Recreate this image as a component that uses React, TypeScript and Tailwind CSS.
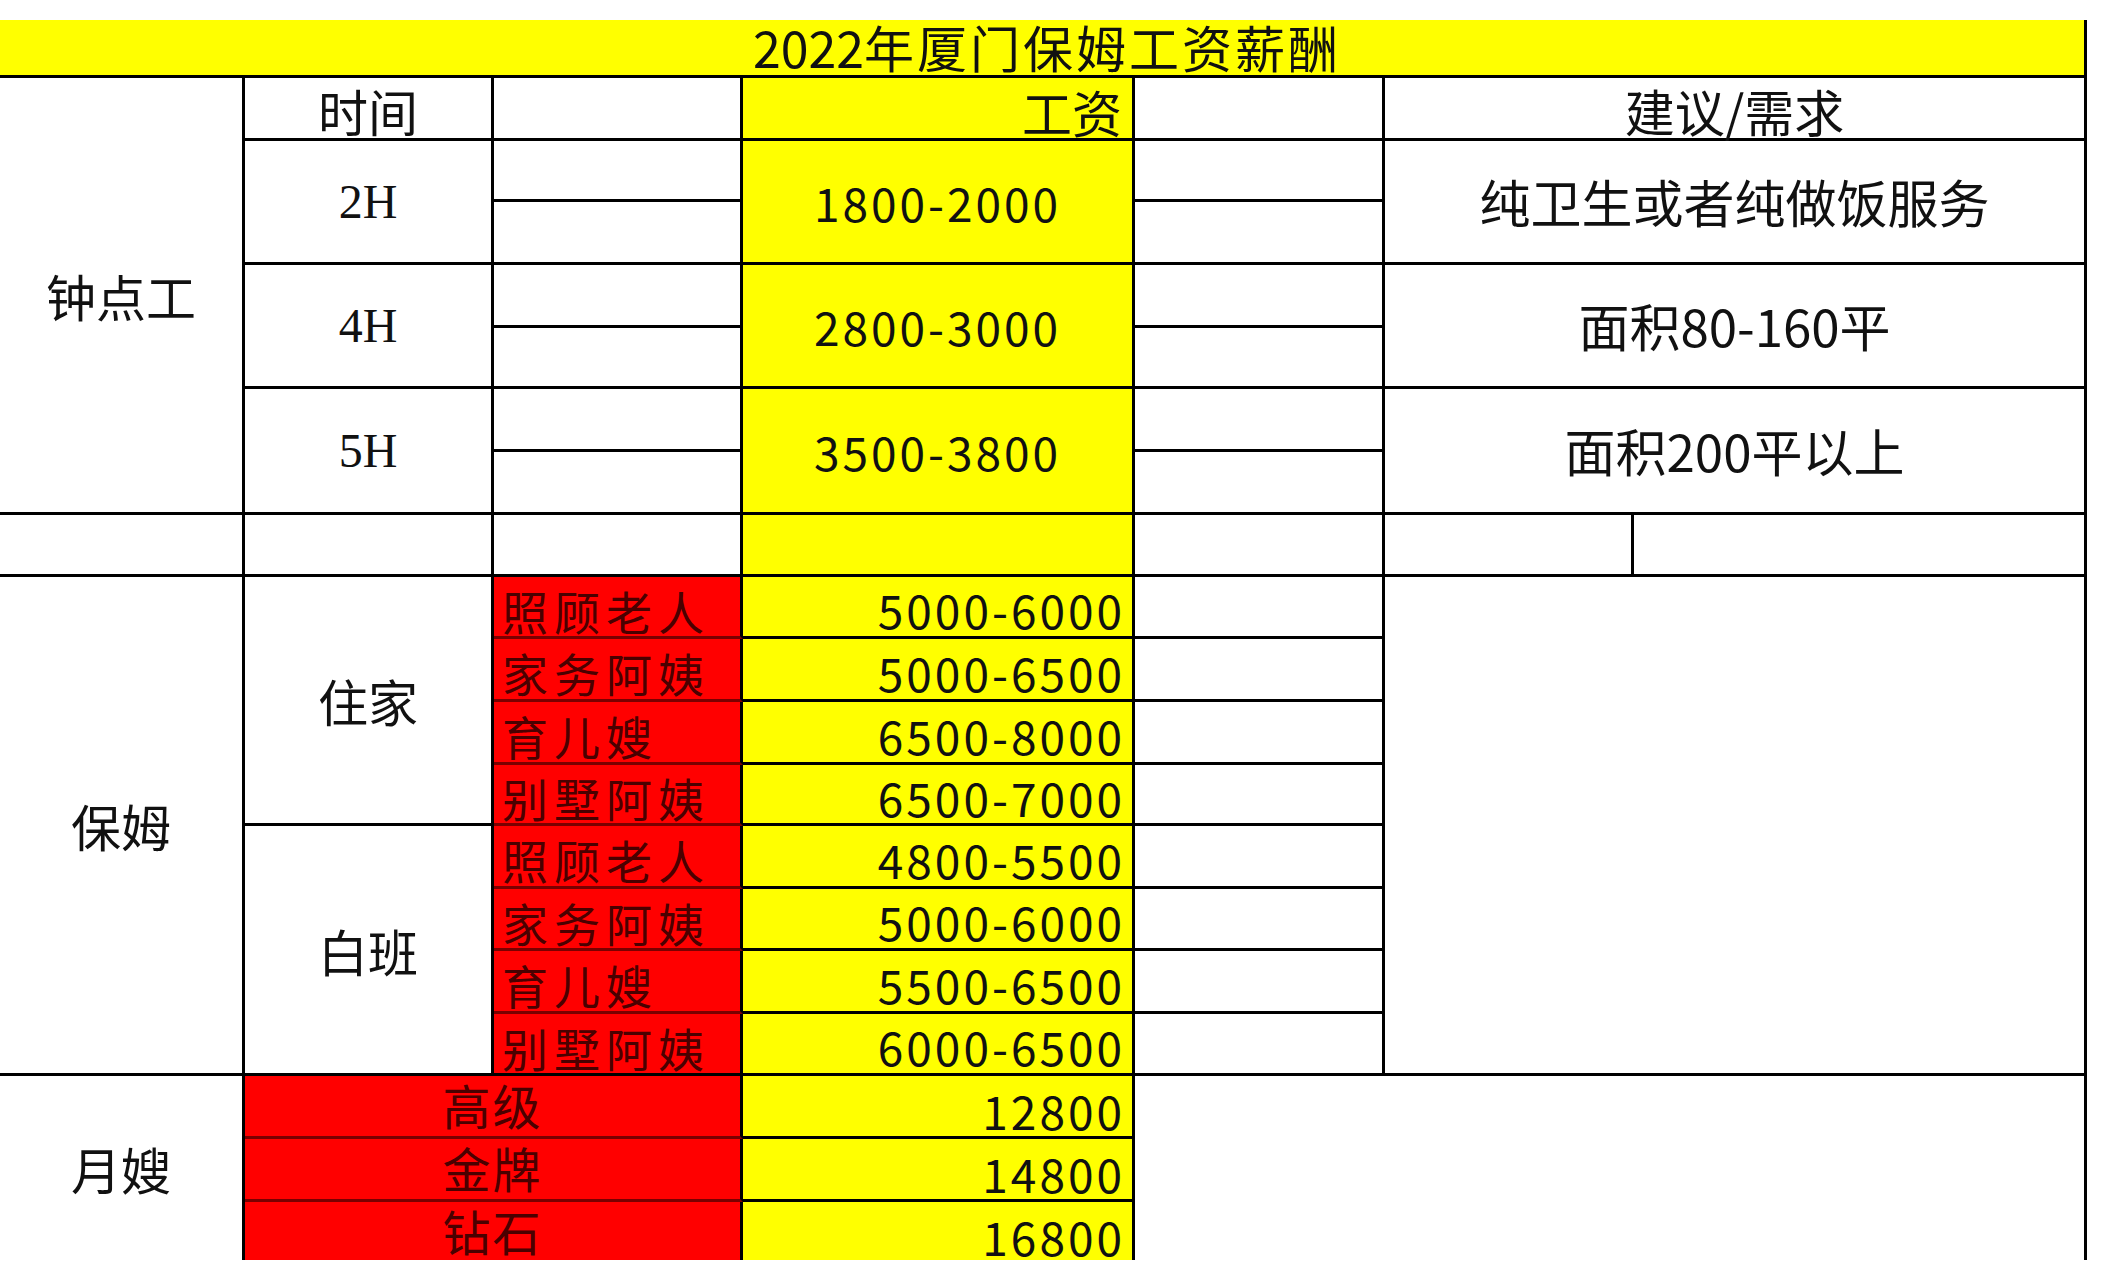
import React from 'react';

// 2022 Xiamen nanny salary sheet, laid out as a spreadsheet grid
const line = 'border-black border-r-[3px] border-b-[3px]';
const cjk = "font-['Noto_Sans_CJK_SC',sans-serif]";

const liveIn = [
    { job: '照顾老人', pay: '5000-6000' },
    { job: '家务阿姨', pay: '5000-6500' },
    { job: '育儿嫂', pay: '6500-8000' },
    { job: '别墅阿姨', pay: '6500-7000' },
];

const dayShift = [
    { job: '照顾老人', pay: '4800-5500' },
    { job: '家务阿姨', pay: '5000-6000' },
    { job: '育儿嫂', pay: '5500-6500' },
    { job: '别墅阿姨', pay: '6000-6500' },
];

const hourly = [
    { time: '2H', pay: '1800-2000', note: '纯卫生或者纯做饭服务' },
    { time: '4H', pay: '2800-3000', note: '面积80-160平' },
    { time: '5H', pay: '3500-3800', note: '面积200平以上' },
];

const maternity = [
    { level: '高级', pay: '12800' },
    { level: '金牌', pay: '14800' },
    { level: '钻石', pay: '16800' },
];

// explicit row starts (grid rows are 1-based, title is row 1)
const hourlyRows = ['row-start-3', 'row-start-5', 'row-start-7'];
const hourlyRowsB = ['row-start-4', 'row-start-6', 'row-start-8'];
const nannyRows = ['row-start-10', 'row-start-11', 'row-start-12', 'row-start-13', 'row-start-14', 'row-start-15', 'row-start-16', 'row-start-17'];
const mRows = ['row-start-18', 'row-start-19', 'row-start-20'];

export default function App() {
    const nanny = [...liveIn, ...dayShift];

    return (
        <div className={`min-h-screen w-[2101px] bg-white pt-[20px] text-[#111] ${cjk}`}>
            <div className="grid grid-cols-[245px_249px_249px_392px_250px_249px_453px] grid-rows-[58px_63px_61px_63px_63px_61px_63px_63px_62px_62px_63px_63px_61px_63px_62px_63px_62px_63px_63px_58px]">
                {/* title */}
                <div className={`col-start-1 col-span-7 row-start-1 ${line} bg-[#ffff00] flex items-center justify-center text-[50px] leading-none pb-[4px] pl-[10px]`}>
                    <span>2022</span><span className="tracking-[3px]">年厦门保姆工资薪酬</span>
                </div>

                {/* header row */}
                <div className={`col-start-1 row-start-2 row-span-7 ${line} flex items-center justify-center text-[50px] leading-none`}>钟点工</div>
                <div className={`col-start-2 row-start-2 ${line} flex items-center justify-center text-[50px] leading-none pt-[4px]`}>时间</div>
                <div className={`col-start-3 row-start-2 ${line}`} />
                <div className={`col-start-4 row-start-2 ${line} bg-[#ffff00] flex items-center justify-end pr-[10px] text-[50px] leading-none pt-[6px]`}>工资</div>
                <div className={`col-start-5 row-start-2 ${line}`} />
                <div className={`col-start-6 col-span-2 row-start-2 ${line} flex items-center justify-center text-[50px] leading-none pt-[4px]`}>建议/需求</div>

                {/* hourly rows */}
                {hourly.map((h, i) => (
                    <React.Fragment key={h.time}>
                        <div className={`col-start-2 ${hourlyRows[i]} row-span-2 ${line} flex items-center justify-center font-['Liberation_Serif',serif] text-[48px] leading-none`}>{h.time}</div>
                        <div className={`col-start-3 ${hourlyRows[i]} ${line}`} />
                        <div className={`col-start-3 ${hourlyRowsB[i]} ${line}`} />
                        <div className={`col-start-4 ${hourlyRows[i]} row-span-2 ${line} bg-[#ffff00] flex items-center justify-center text-[46px] leading-none tracking-[3px]`}>{h.pay}</div>
                        <div className={`col-start-5 ${hourlyRows[i]} ${line}`} />
                        <div className={`col-start-5 ${hourlyRowsB[i]} ${line}`} />
                        <div className={`col-start-6 col-span-2 ${hourlyRows[i]} row-span-2 ${line} flex items-center justify-center text-[51px] leading-none`}>{h.note}</div>
                    </React.Fragment>
                ))}

                {/* blank row */}
                <div className={`col-start-1 row-start-9 ${line}`} />
                <div className={`col-start-2 row-start-9 ${line}`} />
                <div className={`col-start-3 row-start-9 ${line}`} />
                <div className={`col-start-4 row-start-9 ${line} bg-[#ffff00]`} />
                <div className={`col-start-5 row-start-9 ${line}`} />
                <div className={`col-start-6 row-start-9 ${line}`} />
                <div className={`col-start-7 row-start-9 ${line}`} />

                {/* nanny */}
                <div className={`col-start-1 row-start-10 row-span-8 ${line} flex items-center justify-center text-[50px] leading-none`}>保姆</div>
                <div className={`col-start-2 row-start-10 row-span-4 ${line} flex items-center justify-center text-[50px] leading-none`}>住家</div>
                <div className={`col-start-2 row-start-14 row-span-4 ${line} flex items-center justify-center text-[50px] leading-none`}>白班</div>
                {nanny.map((n, i) => (
                    <React.Fragment key={i}>
                        <div className={`col-start-3 ${nannyRows[i]} border-r-[3px] border-b-[3px] border-r-black ${i === 7 ? 'border-b-black' : 'border-b-[#7a0000]'} bg-[#ff0000] flex items-center pl-[8px] pt-[6px] text-[46px] leading-none tracking-[6px] text-[#4a0000]`}>{n.job}</div>
                        <div className={`col-start-4 ${nannyRows[i]} ${line} bg-[#ffff00] flex items-center justify-end pr-[7px] pt-[5px] text-[46px] leading-none tracking-[3px]`}>{n.pay}</div>
                        <div className={`col-start-5 ${nannyRows[i]} ${line}`} />
                    </React.Fragment>
                ))}
                <div className={`col-start-6 col-span-2 row-start-10 row-span-8 ${line}`} />

                {/* maternity */}
                <div className="col-start-1 row-start-18 row-span-3 border-r-[3px] border-black flex items-center justify-center text-[50px] leading-none">月嫂</div>
                {maternity.map((m, i) => (
                    <React.Fragment key={m.level}>
                        <div className={`col-start-2 col-span-2 ${mRows[i]} border-r-[3px] border-r-black ${i < 2 ? 'border-b-[3px] border-b-[#7a0000]' : ''} bg-[#ff0000] flex items-start justify-center pt-[4px] text-[48px] leading-none tracking-[2px] text-[#4a0000]`}>{m.level}</div>
                        <div className={`col-start-4 ${mRows[i]} border-r-[3px] border-black ${i < 2 ? 'border-b-[3px]' : ''} bg-[#ffff00] flex items-start justify-end pr-[7px] pt-[11px] text-[46px] leading-none tracking-[3px]`}>{m.pay}</div>
                    </React.Fragment>
                ))}
                <div className="col-start-5 col-span-3 row-start-18 row-span-3 border-r-[3px] border-black" />
            </div>
        </div>
    );
}
